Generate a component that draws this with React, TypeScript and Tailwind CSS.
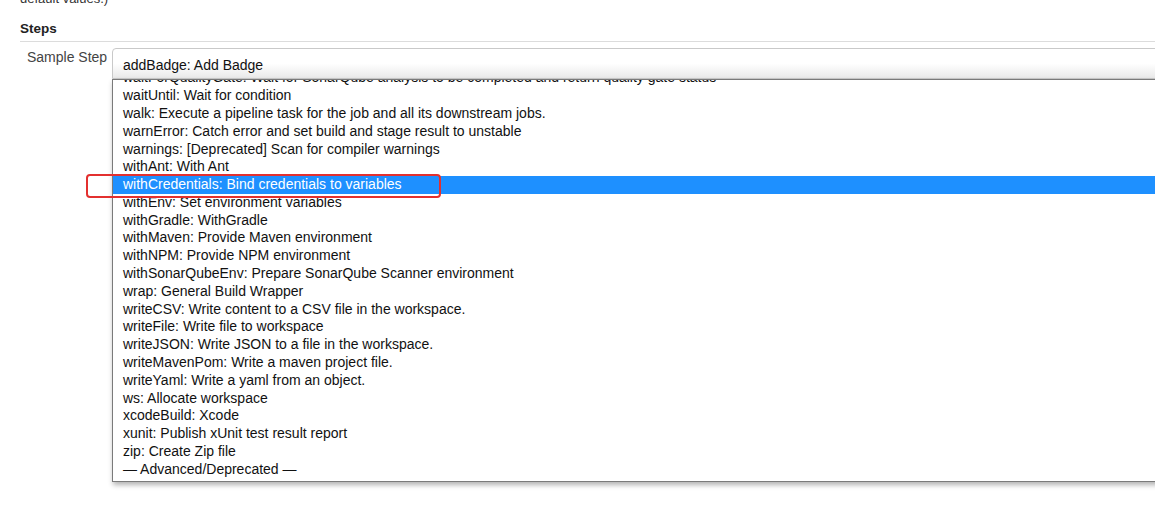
import React from "react";

const steps = [
  "waitForQualityGate: Wait for SonarQube analysis to be completed and return quality gate status",
  "waitUntil: Wait for condition",
  "walk: Execute a pipeline task for the job and all its downstream jobs.",
  "warnError: Catch error and set build and stage result to unstable",
  "warnings: [Deprecated] Scan for compiler warnings",
  "withAnt: With Ant",
  "withCredentials: Bind credentials to variables",
  "withEnv: Set environment variables",
  "withGradle: WithGradle",
  "withMaven: Provide Maven environment",
  "withNPM: Provide NPM environment",
  "withSonarQubeEnv: Prepare SonarQube Scanner environment",
  "wrap: General Build Wrapper",
  "writeCSV: Write content to a CSV file in the workspace.",
  "writeFile: Write file to workspace",
  "writeJSON: Write JSON to a file in the workspace.",
  "writeMavenPom: Write a maven project file.",
  "writeYaml: Write a yaml from an object.",
  "ws: Allocate workspace",
  "xcodeBuild: Xcode",
  "xunit: Publish xUnit test result report",
  "zip: Create Zip file",
  "— Advanced/Deprecated —",
];

const App = () => {
  return (
    <div className="relative w-[1155px] h-[531px] overflow-hidden bg-white font-['Liberation_Sans',Arial,sans-serif] text-[#333]">
      <div className="pl-[20px]">
        <div className="-mt-[9px] h-[16px] leading-[16px] text-[13px] text-[#333]">default values.)</div>
        <div className="mt-[14px] pb-[4px] border-b border-[#dcdcdc]">
          <div className="h-[16px] leading-[16px] text-[13.5px] font-bold text-[#222]">Steps</div>
        </div>
        <div className="flex mt-[6px]">
          <div className="w-[92px] shrink-0 pl-[7px] pt-[1px] text-[14px] leading-[16px] text-[#444] whitespace-nowrap">Sample Step</div>
          <div className="flex flex-col shrink-0">
            <div className="w-[1100px] h-[31px] flex items-center pl-[10px] pt-[3px] border border-[#c9c9c9] rounded-tl-[4px] bg-gradient-to-b from-white via-white to-[#e9e9e9] text-[14px] text-[#111]">
              addBadge: Add Badge
            </div>
            <div className="w-[1100px] h-[403px] border border-[#7a7a7a] bg-white shadow-[1px_3px_5px_rgba(0,0,0,0.3)] overflow-hidden">
              <div className="-mt-[10.7px]">
                {steps.map((s) => (
                  <div
                    key={s}
                    className={
                      s.startsWith("withCredentials")
                        ? "h-[17.8px] leading-[17.8px] pl-[10px] text-[14px] whitespace-nowrap bg-[#1e90ff] text-white"
                        : "h-[17.8px] leading-[17.8px] pl-[10px] text-[14px] whitespace-nowrap text-[#111]"
                    }
                  >
                    {s}
                  </div>
                ))}
              </div>
            </div>
          </div>
        </div>
      </div>
      <div className="absolute left-[86px] top-[174px] w-[355px] h-[24px] border-[2.5px] border-[#e3302f] rounded-[4px]" />
    </div>
  );
};

export default App;
